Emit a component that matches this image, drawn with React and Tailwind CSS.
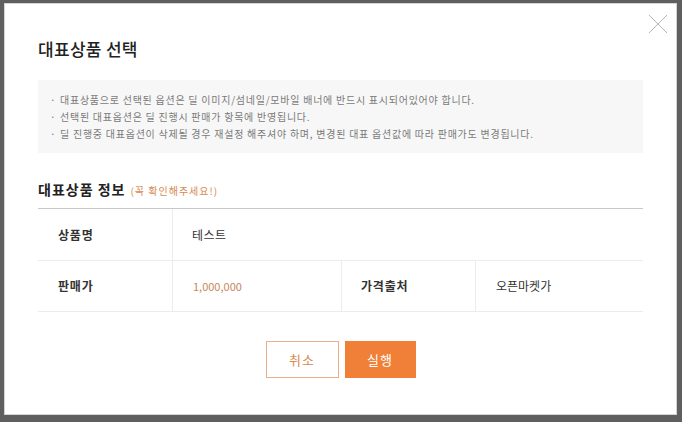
export default function App() {
  const notes = [
    '대표상품으로 선택된 옵션은 딜 이미지/섬네일/모바일 배너에 반드시 표시되어있어야 합니다.',
    '선택된 대표옵션은 딜 진행시 판매가 항목에 반영됩니다.',
    '딜 진행중 대표옵션이 삭제될 경우 재설정 해주셔야 하며, 변경된 대표 옵션값에 따라 판매가도 변경됩니다.',
  ];

  return (
    <div
      className="w-[682px] h-[422px] bg-[#5f5f5f] pt-[3px] pl-[4px] overflow-hidden"
      style={{ fontFamily: '"Noto Sans CJK KR", "Noto Sans", sans-serif' }}
    >
      <div className="relative w-[673px] h-[412px] bg-white border border-[#d4d4d4] px-[33px] pt-[34px]">
        {/* close */}
        <button className="absolute right-[8px] top-[10px] w-[20px] h-[20px]">
          <svg viewBox="0 0 20 20" className="w-[20px] h-[20px]">
            <path d="M1 1L19 19M19 1L1 19" stroke="#b5b5b5" strokeWidth="1" fill="none" />
          </svg>
        </button>

        <h1 className="text-[17px] leading-[22px] text-[#222] font-medium tracking-[0.3px]">대표상품 선택</h1>

        <div className="mt-[20px] bg-[#f7f7f7] px-[12px] pt-[11px] h-[73px]">
          {notes.map((n, i) => (
            <p key={i} className="flex text-[10px] leading-[17px] text-[#7a7a7a] tracking-[0.75px]">
              <span className="w-[10px]">·</span>
              <span>{n}</span>
            </p>
          ))}
        </div>

        <div className="mt-[26px] flex items-baseline gap-[5px]">
          <h2 className="text-[14px] leading-[20px] font-bold text-[#222] tracking-[1px]">대표상품 정보</h2>
          <span className="text-[10px] text-[#d9894f] tracking-[1px]">(꼭 확인해주세요!)</span>
        </div>

        <div className="mt-[9px] border-t border-[#c8c8c8] text-[12px]">
          <div className="flex h-[52px] border-b border-[#ececec]">
            <div className="w-[135px] flex items-center pl-[20px] font-bold text-[#333] border-r border-[#ececec] tracking-[0.8px]">상품명</div>
            <div className="flex-1 flex items-center pl-[19px] text-[#333] tracking-[0.5px]">테스트</div>
          </div>
          <div className="flex h-[51px] border-b border-[#ececec]">
            <div className="w-[135px] flex items-center pl-[20px] font-bold text-[#333] border-r border-[#ececec] tracking-[0.8px]">판매가</div>
            <div className="w-[169px] flex items-center pl-[20px] text-[#c8875a] border-r border-[#ececec] text-[11px]">1,000,000</div>
            <div className="w-[134px] flex items-center pl-[19px] font-bold text-[#333] border-r border-[#ececec] tracking-[0.8px]">가격출처</div>
            <div className="flex-1 flex items-center pl-[20px] text-[#333]">오픈마켓가</div>
          </div>
        </div>

        <div className="mt-[29px] flex justify-center gap-[6px]">
          <button className="w-[73px] h-[37px] border border-[#e8b08a] text-[#d9894f] text-[13px] tracking-[1px]">취소</button>
          <button className="w-[71px] h-[37px] bg-[#f07f38] text-white text-[13px] tracking-[1px]">실행</button>
        </div>
      </div>
    </div>
  );
}
